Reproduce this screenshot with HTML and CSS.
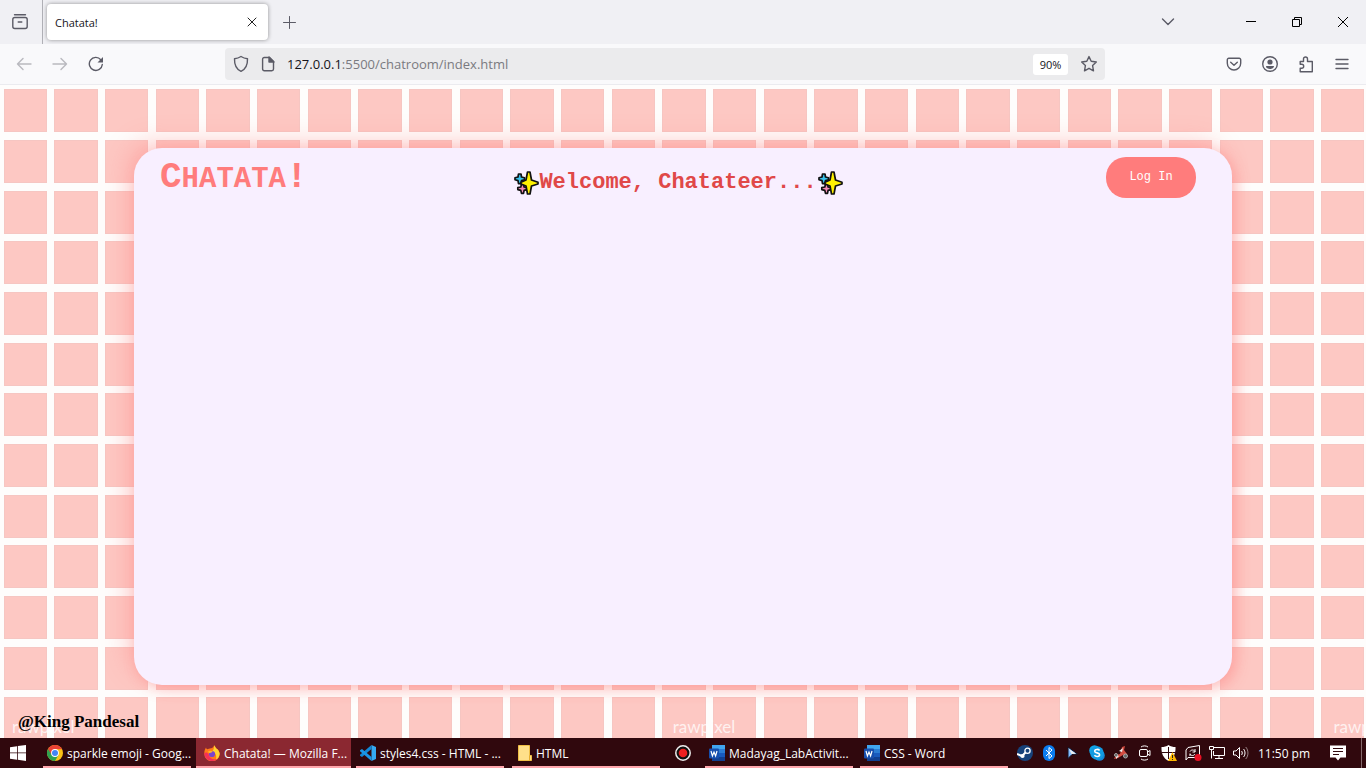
FILE: index.html
```html
<!DOCTYPE html>
<html lang="en">
<head>
<meta charset="utf-8">
<title>Chatata!</title>
<link rel="stylesheet" href="styles.css">
</head>
<body>
<div class="tabbar">
  <button class="view-btn" aria-label="Firefox View">
    <svg width="18" height="18" viewBox="0 0 18 18" class="ico"><path d="M3.500 1.700h11"/><rect x="1.800" y="4.500" width="14.400" height="11" rx="2"/><path d="M7.200 9h3.600"/></svg>
  </button>
  <div class="tab">
    <span class="tab-title">Chatata!</span>
    <button class="icon-btn tab-close" aria-label="Close tab"><svg width="10" height="10" viewBox="0 0 10 10" class="ico thin"><path d="M1 1l8 8M9 1L1 9"/></svg></button>
  </div>
  <button class="icon-btn new-tab" aria-label="New tab"><svg width="14" height="14" viewBox="0 0 14 14" class="ico thin"><path d="M7.500 1.500v12M1.500 7.500h12"/></svg></button>
  <div class="window-controls">
    <button class="icon-btn list-tabs" aria-label="List all tabs"><svg width="14" height="14" viewBox="0 0 14 14" class="ico"><path d="M1.500 4L7 9.500 12.500 4"/></svg></button>
    <button class="win-btn" aria-label="Minimize"><svg width="10" height="10" viewBox="0 0 10 10" class="sys"><path d="M0 4.500h10"/></svg></button>
    <button class="win-btn" aria-label="Restore"><svg width="10" height="10" viewBox="0 0 10 10" class="sys"><path d="M.5 2.500h7v7h-7zM2.500 2.500v-2h7v7h-2"/></svg></button>
    <button class="win-btn" aria-label="Close"><svg width="10" height="10" viewBox="0 0 10 10" class="sys"><path d="M0 0l10 10M10 0L0 10"/></svg></button>
  </div>
</div>

<div class="toolbar">
  <div class="nav-left">
    <button class="nav-btn" aria-label="Back" disabled><svg width="16" height="16" viewBox="0 0 16 16" class="ico"><path d="M15 8H1.500M7 2.500L1.500 8 7 13.500"/></svg></button>
    <button class="nav-btn" aria-label="Forward" disabled><svg width="16" height="16" viewBox="0 0 16 16" class="ico"><path d="M1 8h13.500M9 2.500L14.500 8 9 13.500"/></svg></button>
    <button class="nav-btn" aria-label="Reload"><svg width="16" height="16" viewBox="0 0 16 16" class="ico"><path d="M14.300 8.500A6.500 6.500 0 1 1 12.800 3.700"/><path d="M15 1v5.500H9.500z" fill="#5b5b66" stroke="none"/></svg></button>
  </div>
  <div class="urlbar">
    <svg width="16" height="18" viewBox="0 0 16 18" class="ico"><path d="M8 1.500c2 1.300 4.200 2 6.500 2.200C14.700 9.500 13 14 8 16.300 3 14 1.300 9.500 1.500 3.700 3.800 3.500 6 2.800 8 1.500z"/></svg>
    <svg width="14" height="16" viewBox="0 0 14 16" class="ico"><path d="M3.300 1.500H8.500l4 4v7.500a1.700 1.700 0 0 1-1.700 1.700H3.300A1.700 1.700 0 0 1 1.600 13V3.200a1.700 1.700 0 0 1 1.700-1.700z"/><path d="M8 1v5h5z" fill="#5b5b66"/></svg>
    <span class="url"><span class="host">127.0.0.1</span>:5500/chatroom/index.html</span>
    <button class="zoom-level">90%</button>
    <button class="icon-btn" aria-label="Bookmark this page"><svg width="18" height="18" viewBox="0 0 18 18" class="ico"><path d="M9 1.600l2.200 4.700 5.100.7-3.700 3.600.9 5.200L9 13.300l-4.500 2.500.9-5.200L1.700 7l5.100-.7z"/></svg></button>
  </div>
  <div class="nav-right">
    <button class="nav-btn" aria-label="Save to Pocket"><svg width="16" height="16" viewBox="0 0 16 16" class="ico"><path d="M2.800 2.300h10.400a1.500 1.500 0 0 1 1.500 1.500v3.500a6.700 6.700 0 0 1-13.400 0V3.800a1.500 1.500 0 0 1 1.500-1.500z"/><path d="M4.700 6.300L8 9.300l3.300-3"/></svg></button>
    <button class="nav-btn" aria-label="Account"><svg width="16" height="16" viewBox="0 0 16 16" class="ico"><circle cx="8" cy="8" r="7.300"/><circle cx="8" cy="6" r="2.600" fill="#5b5b66" stroke="none"/><path d="M4 10h8c0 2-2 3-4 3s-4-1-4-3z" fill="#5b5b66" stroke="none"/></svg></button>
    <button class="nav-btn" aria-label="Extensions"><svg width="16" height="17" viewBox="0 0 16 17" class="ico"><path d="M5.500 5.500V3a2 2 0 0 1 4 0v2.500h4.800v10.300H2.200v-3.600h1.500a2 2 0 0 0 0-4H2.200V5.500z"/></svg></button>
    <button class="nav-btn" aria-label="Menu"><svg width="14" height="12" viewBox="0 0 14 12" class="ico"><path d="M1 1.500h12M1 6h12M1 10.500h12"/></svg></button>
  </div>
</div>

<main class="page">
  <svg class="grid-bg" width="100%" height="100%" aria-hidden="true">
    <defs>
      <pattern id="tiles" width="152" height="152" patternUnits="userSpaceOnUse" x="4" y="4">
        <g class="tile">
          <rect x=".5" y=".5" width="42" height="42"/><rect x="50.500" y=".5" width="43" height="42"/><rect x="101.500" y=".5" width="42" height="42"/>
          <rect x=".5" y="51.500" width="42" height="42"/><rect x="50.500" y="51.500" width="43" height="42"/><rect x="101.500" y="51.500" width="42" height="42"/>
          <rect x=".5" y="102.500" width="42" height="42"/><rect x="50.500" y="102.500" width="43" height="42"/><rect x="101.500" y="102.500" width="42" height="42"/>
        </g>
      </pattern>
    </defs>
    <rect width="100%" height="100%" fill="url(#tiles)"/>
  </svg>
  <div class="watermarks" aria-hidden="true"><span>rawpixel</span><span>rawpixel</span><span>rawpixel</span></div>

  <svg width="0" height="0" class="defs" aria-hidden="true">
    <symbol id="sparkles" viewBox="0 0 26 26">
      <g stroke="#111" stroke-width="1.700" stroke-linejoin="round">
        <path d="M5.500 4h2.500l.5 3 3 .8v2l-3 .8-.5 3H5.500l-.5-3-3-.8v-2l3-.8z" fill="#39c3ee"/>
        <path d="M8.500 14h2l.6 3 3 .6v2l-3 .8-.6 3h-2l-.7-3-3-.8v-2l3-.6z" fill="#f48bb5"/>
        <path d="M14.500 2h2.500l1.500 8 6.500 2.300v1.700L18.500 16 17 24h-2.500L13 16l-5-2v-1.700L13 10z" fill="#fff100"/>
      </g>
    </symbol>
  </svg>
  <section class="card">
    <h1 class="brand">C<span class="small">hatata</span>!</h1>
    <h2 class="welcome"><svg width="26" height="26"><use href="#sparkles"/></svg><span>Welcome, Chatateer...</span><svg width="26" height="26"><use href="#sparkles"/></svg></h2>
    <button class="login">Log In</button>
  </section>
  <footer class="credit">@King Pandesal</footer>
</main>

<nav class="taskbar">
  <button class="start" aria-label="Start"><svg width="16" height="16" viewBox="0 0 16 16" fill="#fff"><path d="M0 2.200L7 1.200v6.300H0zM7.800 1.100L16 0v7.500H7.800zM0 8.300h7v6.400L0 13.700zM7.800 8.300H16V16l-8.200-1.200z"/></svg></button>
  <div class="tasks">
    <button class="task"><svg width="16" height="16" viewBox="0 0 16 16"><circle cx="8" cy="8" r="8" fill="#fbc116"/><path d="M1.070 4A8 8 0 0 0 8 16l3.500-6L8 8z" fill="#2fa24f"/><path d="M8 4.200h6.980A8 8 0 0 0 1.070 4L4.600 9.800z" fill="#e94235"/><circle cx="8" cy="8" r="3.900" fill="#fff"/><circle cx="8" cy="8" r="3" fill="#4285f4"/></svg><span>sparkle emoji - Goog...</span></button>
    <button class="task active"><svg width="16" height="16" viewBox="0 0 16 16"><path d="M10 .3c1 1 1.500 2 2 3 1.500.8 3.500 3 3.700 5.500A7.700 7.700 0 0 1 .3 8.500C.2 6 1 4 2 2.500c.3 1 .7 1.500 1.300 1.700C5 3.500 9.500 4 10 .3z" fill="#ff7a1a"/><path d="M10 .3c1 1 1.500 2 2 3 1.500.8 3.500 3 3.700 5.500-.2 3-2 5-3.700 6 1-4-.5-7-3.500-8.500C9.800 4.500 10.300 2.500 10 .3z" fill="#ffd232"/><path d="M.3 8.500C.5 13 4 16.300 8.500 16c2 0 4-.9 5-2-5 1.500-8-1-9-5C3 7 1.500 7 .3 8.500z" fill="#f43058"/><circle cx="8" cy="9" r="3.100" fill="#7b43cf"/><path d="M4 6.500c2-1.300 3.500-.6 5 .3-1.500.2-2 1.700-4 1.200z" fill="#ffb22a"/></svg><span>Chatata! — Mozilla F...</span></button>
    <button class="task"><svg width="16" height="16" viewBox="0 0 16 16"><path d="M11.500 0L16 2v12l-4.500 2z" fill="#35a9f2"/><path d="M11.500 0v4L2 12 0 10.700v-1z" fill="#1287d4"/><path d="M11.500 16v-4L2 4 0 5.300v1z" fill="#1b95e5"/></svg><span>styles4.css - HTML - ...</span></button>
    <button class="task folder"><svg width="14" height="16" viewBox="0 0 14 16"><path d="M.5.500h11v10h2v5H.5z" fill="#ffe08a" stroke="#f0bf45"/><path d="M11.500 10.500v5" stroke="#e6ac2c"/></svg><span>HTML</span></button>
    <button class="recorder" aria-label="Recorder"><svg width="16" height="16" viewBox="0 0 16 16"><circle cx="8" cy="8" r="7.200" fill="#111" stroke="#eee" stroke-width="1.500"/><circle cx="8" cy="8" r="4.300" fill="#ee2020"/></svg></button>
    <button class="task"><svg width="16" height="16"><use href="#word"/></svg><span>Madayag_LabActivit...</span></button>
    <button class="task"><svg width="16" height="16"><use href="#word"/></svg><span>CSS - Word</span></button>
  </div>
  <svg width="0" height="0" class="defs" aria-hidden="true"><symbol id="word" viewBox="0 0 16 16"><rect x="3" width="13" height="4" fill="#41a5ee"/><rect x="3" y="4" width="13" height="4" fill="#2b7cd3"/><rect x="3" y="8" width="13" height="4" fill="#185abd"/><rect x="3" y="12" width="13" height="4" fill="#103f91"/><rect y="3.500" width="10" height="10" rx="1" fill="#174fad"/><path d="M2 6l1.400 5L5 7l1.600 4L8 6" fill="none" stroke="#fff" stroke-width="1.200"/></symbol></svg>
  <div class="tray">
    <button aria-label="Steam"><svg width="16" height="16" viewBox="0 0 16 16"><circle cx="8" cy="8" r="8" fill="#17427a"/><path d="M0 9l5 2 4-4" stroke="#fff" stroke-width="2" fill="none"/><circle cx="10.500" cy="5.800" r="2.600" fill="#17427a" stroke="#fff" stroke-width="1.300"/><circle cx="5.500" cy="11" r="2.100" fill="#fff"/></svg></button>
    <button aria-label="Bluetooth"><svg width="12" height="16" viewBox="0 0 12 16"><rect width="12" height="16" rx="6" fill="#0a7cf0"/><path d="M3 5l6 6-3 2.500v-11L9 5l-6 6" fill="none" stroke="#fff"/></svg></button>
    <button aria-label="Pointer"><svg width="12" height="14" viewBox="0 0 12 14"><path d="M1 1l9.500 7L5 8.500 1 12.500z" fill="#80bcff" stroke="#151020"/><path d="M2 3l7 4.700-4.500.3z" fill="#eee"/></svg></button>
    <button aria-label="Skype"><svg width="16" height="16" viewBox="0 0 16 16"><circle cx="5.500" cy="5.500" r="5.300" fill="#10a7e8"/><circle cx="10.500" cy="10.500" r="5.300" fill="#1486d5"/><circle cx="8" cy="8" r="6.800" fill="#119be2"/><path d="M10.600 5.400C9.500 4 5.700 4 5.700 6.200c0 2.100 4.900 1.200 4.900 3.500 0 2.200-3.900 2.200-5.200.6" fill="none" stroke="#fff" stroke-width="1.600"/></svg></button>
    <button aria-label="Utility"><svg width="16" height="14" viewBox="0 0 16 14"><path d="M9 1l3-1-1 4 3 4-4 1-5 3-4 1 2-4 4-1z" fill="#d34c40"/><path d="M6 5l4-3-1 4zM3 9l3 1-3 3z" fill="#eee"/><circle cx="12.500" cy="10" r="2" fill="#666" stroke="#aaa"/><circle cx="3" cy="9" r="1.500" fill="#555" stroke="#aaa"/></svg></button>
    <button aria-label="Meet now"><svg width="14" height="16" viewBox="0 0 14 16" class="tray-line"><rect x="1.500" y="4.500" width="8" height="7" rx="1.500"/><path d="M9.500 7l2.500-1.500v5L9.500 9M3 2c2-1.500 5-1.500 7 0M3 14c2 1.500 5 1.500 7 0"/></svg></button>
    <button aria-label="Windows Security"><svg width="16" height="16" viewBox="0 0 16 16"><path d="M7.500 0C9.500 1.500 12 2 14.500 2c.3 6-1.500 11-7 14C2 13 .2 8 .5 2 3 2 5.500 1.500 7.500 0z" fill="#fff"/><path d="M7.500 2v12M1 7.500h13" stroke="#30080d"/><path d="M11.500 7L16 16H7z" fill="#ffb900"/><path d="M11.500 10v3M11.500 14v1" stroke="#222"/></svg></button>
    <button aria-label="Updates"><svg width="17" height="16" viewBox="0 0 17 16" class="tray-line"><path d="M3 2.500L14.500.5v12H3L1 15V5z"/><path d="M5 6.500c1-2 4-2 5 0M10 4v3H7.500M10 9c-1 2-4 2-5 0M5 11V8.500"/><circle cx="13" cy="12.500" r="3.500" fill="#e81123" stroke="none"/></svg></button>
    <button aria-label="Network"><svg width="16" height="16" viewBox="0 0 16 16" class="tray-line"><path d="M5 2.500h10.500v8H4.500V6M10 10.500v3M6 13.500h8M.5 1.500h4v3h-4zM2.500 4.500v9"/></svg></button>
    <button aria-label="Volume"><svg width="16" height="16" viewBox="0 0 16 16" class="tray-line"><path d="M.5 6h2.500L6.500 2.500v11L3 10H.5zM8.500 6c1 1 1 3 0 4M10.500 4c2 2.200 2 5.800 0 8"/><path d="M12.700 2c3 3.200 3 8.800 0 12" opacity=".5"/></svg></button>
  </div>
  <button class="clock">11:50 pm</button>
  <button class="notices" aria-label="Notifications"><svg width="16" height="16" viewBox="0 0 16 16"><path d="M0 .5h16v12h-5.500L8 15.500l-2.500-3H0z" fill="#fff"/><path d="M3 3.500h10M3 6.500h10M3 9.500h6" stroke="#30080d"/></svg></button>
</nav>
</body>
</html>
```
FILE: styles.css
```css
* { box-sizing: border-box; }

body {
  margin: 0;
  height: 100vh;
  display: flex;
  flex-direction: column;
  overflow: hidden;
  font-family: "Open Sans", "Noto Sans", sans-serif;
  font-size: 12px;
  color: #15141a;
}

button {
  border: 0;
  padding: 0;
  background: none;
  font: inherit;
  color: inherit;
}

svg { flex: none; display: block; }

.ico {
  fill: none;
  stroke: #5b5b66;
  stroke-width: 1.4;
  stroke-linecap: round;
  stroke-linejoin: round;
}
.thin { stroke-width: 1; }
.sys { fill: none; stroke: #000; }
.defs { position: absolute; }

.icon-btn,
.nav-btn,
.win-btn,
.view-btn {
  display: flex;
  align-items: center;
  justify-content: center;
}

/* Tab strip */
.tabbar {
  display: flex;
  align-items: center;
  height: 44px;
  background: #f0f0f4;
}
.view-btn {
  width: 43px;
  height: 44px;
  padding-right: 3px;
  border-right: 1px solid #b0b0b6;
}
.tab {
  display: flex;
  align-items: center;
  justify-content: space-between;
  width: 221px;
  height: 36px;
  margin-left: 4px;
  padding: 0 8px;
  border-radius: 4px;
  background: #fff;
  box-shadow: 0 0 4px rgba(0, 0, 0, .4);
}
.tab-title { font-size: 11px; }
.tab-close { width: 16px; height: 24px; }
.tab-close svg { stroke: #222; }
.new-tab { width: 36px; height: 36px; margin-left: 3px; }
.window-controls {
  display: flex;
  margin-left: auto;
}
.list-tabs { width: 36px; margin-right: 42px; }
.win-btn { width: 46px; height: 44px; }

/* Navigation toolbar */
.toolbar {
  display: flex;
  align-items: center;
  height: 41px;
  background: #f9f9fb;
  border-bottom: 1px solid #ebebef;
}
.nav-left { display: flex; flex: 0 0 225px; padding-left: 6px; }
.nav-right {
  display: flex;
  flex: 0 0 261px;
  justify-content: flex-end;
  padding-right: 6px;
}
.nav-btn { width: 36px; height: 32px; }
.nav-btn:disabled { opacity: .4; }
.urlbar {
  display: flex;
  flex: 1;
  align-items: center;
  gap: 12px;
  height: 32px;
  padding: 0 7px 0 8px;
  border-radius: 4px;
  background: #ebebed;
}
.url { flex: 1; font-size: 13px; color: #7a7a80; }
.host { color: #15141a; }
.zoom-level {
  width: 35px;
  height: 21px;
  border-radius: 3px;
  background: #fff;
  font-size: 11px;
}

/* Chat page */
.page {
  position: relative;
  display: flex;
  flex: 1;
  flex-direction: column;
  min-height: 0;
  padding: 63px 134px 0;
  overflow: hidden;
  background: #fefdfc;
}
.grid-bg { position: absolute; inset: 0; }
.tile { fill: #fdc8c3; stroke: #f6c6c2; }
.watermarks {
  position: absolute;
  right: -30px;
  bottom: 1px;
  left: 12px;
  display: flex;
  justify-content: space-between;
  font-family: Lato, sans-serif;
  font-size: 17px;
  line-height: 20px;
  color: rgba(255, 255, 255, .75);
}
.card {
  position: relative;
  display: grid;
  flex: 1;
  grid-template-columns: 1fr auto 1fr;
  align-items: start;
  padding: 9px 36px 0 26px;
  border-radius: 28px;
  background: #f8efff;
  box-shadow: 4px 4px 14px rgba(255, 124, 124, .45), -8px -8px 24px rgba(255, 124, 124, .3);
}
.brand,
.welcome,
.login { font-family: "Courier New", "Liberation Mono", monospace; }
.brand {
  margin: 0;
  font-size: 36px;
  line-height: 42px;
  color: #ff7c7c;
}
.small { font-size: 29px; text-transform: uppercase; }
.welcome {
  display: flex;
  align-items: center;
  margin: 12px 0 0;
  font-size: 22px;
  line-height: 28px;
  color: #e04848;
}
.login {
  justify-self: end;
  width: 90px;
  height: 41px;
  padding-bottom: 2px;
  border-radius: 20px;
  background: #ff7c7c;
  font-size: 12px;
  color: #fff;
}
.credit {
  position: relative;
  height: 53px;
  margin-left: -116px;
  padding-top: 27px;
  font: bold 17px/20px "Times New Roman", "Liberation Serif", serif;
  color: #000;
}

/* Taskbar */
.taskbar {
  display: flex;
  height: 30px;
  background: #30080d;
  color: #fff;
}
.taskbar button {
  display: flex;
  flex: none;
  align-items: center;
  justify-content: center;
}
.start { width: 43px; padding-right: 7px; }
.tasks { display: flex; flex: 1; min-width: 0; overflow: hidden; }
.taskbar .task {
  justify-content: flex-start;
  gap: 4px;
  width: 148px;
  margin-right: 7px;
  padding: 2px 0 0 4px;
  border-bottom: 2px solid #ffa6ac;
  overflow: hidden;
  white-space: nowrap;
}
.taskbar .task:first-child,
.taskbar .active { margin-right: 5px; }
.taskbar .active {
  width: 155px;
  padding-left: 8px;
  background: #8b2831;
}
.taskbar .folder { margin-right: 0; margin-left: 1px; padding-left: 6px; }
.recorder { width: 45px; }
.tray { display: flex; }
.tray button { width: 24px; }
.tray-line { fill: none; stroke: #fff; }
.clock { width: 62px; }
.taskbar .notices {
  width: 47px;
  margin-right: 4px;
  border-right: 1px solid #84686b;
}
```
